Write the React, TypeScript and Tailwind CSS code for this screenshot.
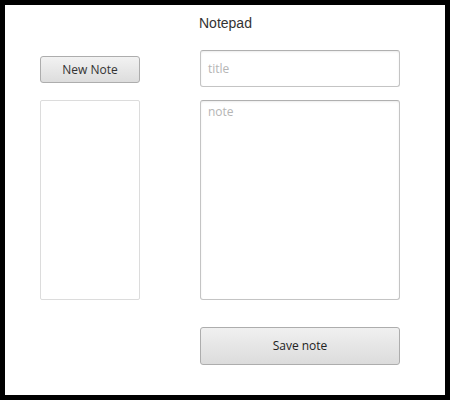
import React from "react";

export default function App() {
  return (
    <div className="w-[450px] h-[400px] bg-black p-[5px]">
      <div className="w-[440px] h-[390px] bg-white flex flex-col" style={{ fontFamily: "'Open Sans', 'Noto Sans', sans-serif" }}>
        <div className="h-[35px] pt-[10px] pl-[194px] text-[14px] leading-[16px] text-[#333333]" style={{ fontFamily: "'Liberation Sans', Arial, sans-serif" }}>
          Notepad
        </div>
        <div className="flex pl-[35px] pt-[10px] gap-[60px]">
          <div className="flex flex-col w-[100px]">
            <div className="mt-[6px] h-[27px] flex items-center justify-center rounded-[3px] border border-[#adadad] bg-gradient-to-b from-[#f2f2f2] to-[#dddddd] text-[12px] text-[#333]">
              New Note
            </div>
            <div className="mt-[17px] h-[200px] rounded-[2px] border border-[#dcdcdc] bg-white" />
          </div>
          <div className="flex flex-col w-[200px]">
            <div className="h-[37px] rounded-[3px] border border-[#c4c4c4] border-t-[#b0b0b0] shadow-[inset_0_1px_2px_rgba(0,0,0,0.08)] pl-[7px] flex items-center text-[12px] text-[#b5b5b5]">
              title
            </div>
            <div className="mt-[13px] h-[200px] rounded-[3px] border border-[#c4c4c4] border-t-[#b0b0b0] shadow-[inset_0_1px_2px_rgba(0,0,0,0.08)] pl-[7px] pt-[3px] text-[12px] leading-[16px] text-[#b5b5b5]">
              note
            </div>
            <div className="mt-[27px] h-[38px] flex items-center justify-center rounded-[3px] border border-[#adadad] bg-gradient-to-b from-[#f0f0f0] to-[#dcdcdc] text-[12px] text-[#222]">
              Save note
            </div>
          </div>
        </div>
      </div>
    </div>
  );
}
